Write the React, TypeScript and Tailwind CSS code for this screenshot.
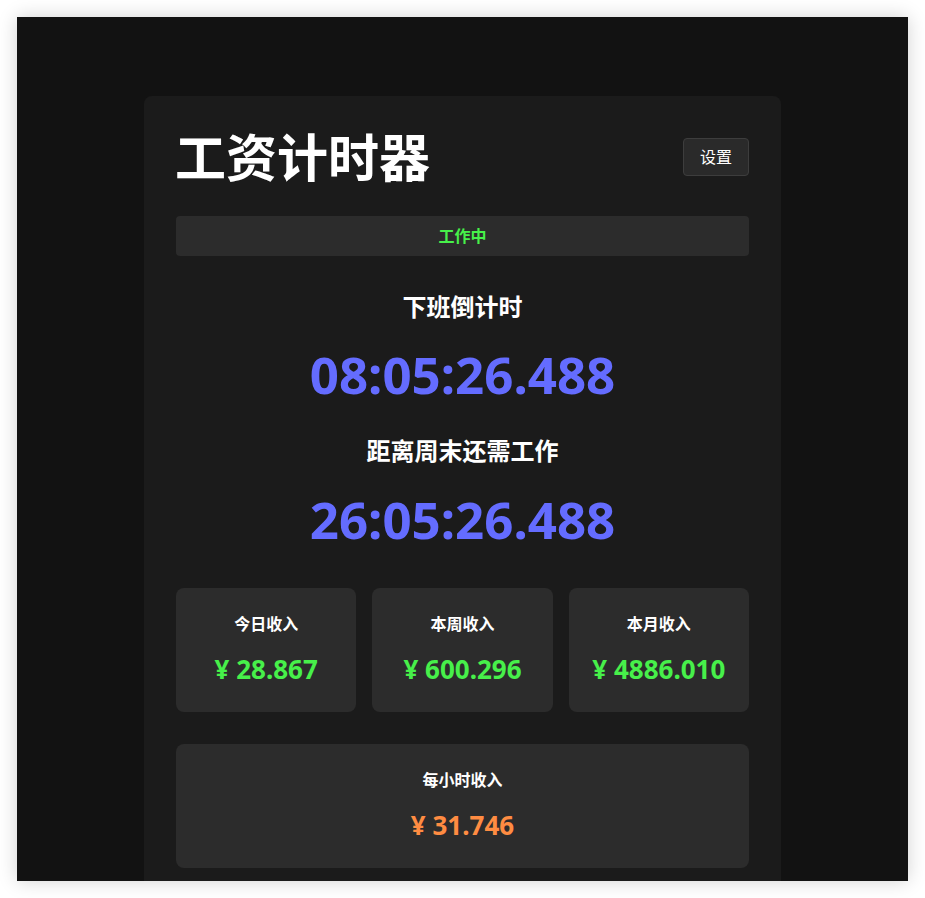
const font = "font-['Noto_Sans','Noto_Sans_CJK_SC',sans-serif]";

function StatCard({ label, value, color }: { label: string; value: string; color: string }) {
  return (
    <div className="flex flex-col items-center rounded-lg bg-[#2c2c2c] pt-[24px] pb-[27px]">
      <div className="text-base font-bold leading-6 text-white">{label}</div>
      <div className={`mt-[17px] text-[26px] font-bold leading-8 ${color}`}>{value}</div>
    </div>
  );
}

export default function App() {
  return (
    <div className={`min-h-screen bg-white p-[17px] ${font}`}>
      <div className="h-[864px] overflow-hidden bg-[#121212] pt-[79px] shadow-[0_0_18px_rgba(0,0,0,0.18)]">
        <div className="ml-[127px] w-[637px] rounded-lg bg-[#1b1b1b] px-8 pt-8 pb-10">
          {/* header */}
          <div className="flex h-[58px] items-center justify-between">
            <h1 className="ml-[-1px] text-[51px] font-bold leading-none text-white">工资计时器</h1>
            <button className="h-[38px] w-[66px] rounded border border-[#3d3d3d] bg-[#2a2a2a] text-base text-white">
              设置
            </button>
          </div>

          <div className="mt-[30px] flex h-10 items-center justify-center rounded bg-[#2c2c2c] text-base font-bold text-[#47f04a]">
            工作中
          </div>

          <div className="flex flex-col items-center">
            <h2 className="mt-[35px] text-2xl font-bold leading-8 text-white">下班倒计时</h2>
            <div className="mt-[19px] text-[51px] font-bold leading-[64px] text-[#646cff]">08:05:26.488</div>
            <h2 className="mt-[29px] text-2xl font-bold leading-8 text-white">距离周末还需工作</h2>
            <div className="mt-[20px] text-[51px] font-bold leading-[64px] text-[#646cff]">26:05:26.488</div>
          </div>

          <div className="mt-[37px] grid grid-cols-3 gap-4">
            <StatCard label="今日收入" value="¥ 28.867" color="text-[#47f04a]" />
            <StatCard label="本周收入" value="¥ 600.296" color="text-[#47f04a]" />
            <StatCard label="本月收入" value="¥ 4886.010" color="text-[#47f04a]" />
          </div>

          <div className="mt-8">
            <StatCard label="每小时收入" value="¥ 31.746" color="text-[#ff8c42]" />
          </div>
        </div>
      </div>
    </div>
  );
}
